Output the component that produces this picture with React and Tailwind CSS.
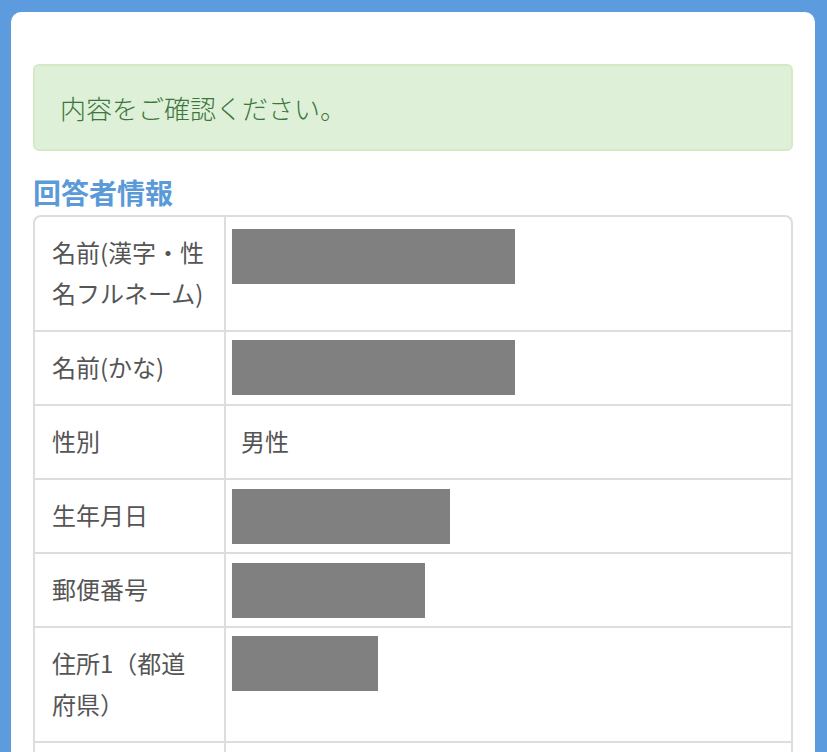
import React from "react";

const rows = [
  { label: ["名前(漢字・性", "名フルネーム)"], box: { w: 283, top: 12 } },
  { label: ["名前(かな)"], box: { w: 283, top: 8 } },
  { label: ["性別"], text: "男性" },
  { label: ["生年月日"], box: { w: 218, top: 9 } },
  { label: ["郵便番号"], box: { w: 193, top: 9 } },
  { label: ["住所1（都道", "府県）"], box: { w: 146, top: 8 } },
  { label: [] },
];

const Row = ({ row, first }) => (
  <div className={`flex min-h-[72px] ${first ? "" : "border-t-2 border-[#dddddd]"}`}>
    <div className="w-[191px] shrink-0 border-r-2 border-[#dddddd] pl-[17px] pr-[8px] pt-[14px] pb-[17px] text-[24px] leading-[41px] text-[#555555]">
      {row.label.map((l, i) => (
        <div key={i}>{l}</div>
      ))}
    </div>
    <div className="flex-1">
      {row.text && (
        <div className="px-[15px] pt-[14px] pb-[17px] text-[24px] leading-[41px] text-[#555555]">
          {row.text}
        </div>
      )}
      {row.box && (
        <div className="pl-[6px]" style={{ paddingTop: row.box.top }}>
          <div className="h-[55px] bg-[#808080]" style={{ width: row.box.w }} />
        </div>
      )}
    </div>
  </div>
);

export default function App() {
  return (
    <div
      className="h-[752px] overflow-hidden bg-[#5b9bde] pl-[11px] pr-[12px] pt-[12px]"
      style={{ fontFamily: '"Noto Sans CJK JP", "Noto Sans", sans-serif' }}
    >
      <div className="min-h-[740px] rounded-t-[10px] bg-white px-[22px] pt-[52px]">
        <div className="flex h-[87px] items-center rounded-[6px] border-2 border-[#d6e9c6] bg-[#dff0d8] pl-[25px] text-[26px] font-light text-[#3c763d]">
          内容をご確認ください。
        </div>

        <h2 className="mt-[22px] mb-[4px] text-[28px] font-bold leading-[38px] text-[#5a9ad8]">
          回答者情報
        </h2>

        <div className="overflow-hidden rounded-t-[8px] border-2 border-b-0 border-[#dddddd]">
          {rows.map((r, i) => (
            <Row key={i} row={r} first={i === 0} />
          ))}
        </div>
      </div>
    </div>
  );
}
